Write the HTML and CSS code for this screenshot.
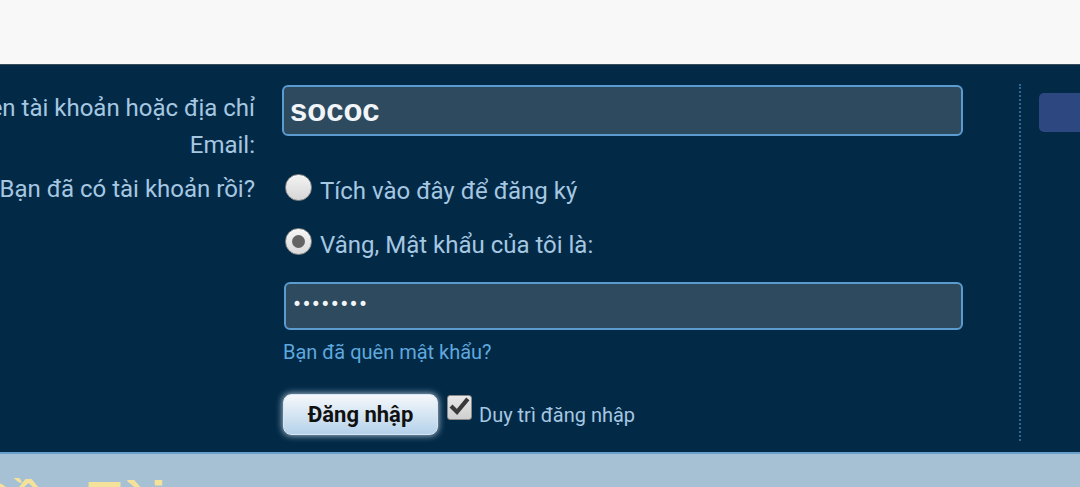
FILE: index.html
```html
<!DOCTYPE html>
<html lang="vi">
<head>
<meta charset="utf-8">
<title>Đăng nhập</title>
<link rel="stylesheet" href="styles.css">
</head>
<body>
<div class="topbar"></div>
<div class="main">
  <form class="login">
    <label class="label label-user" for="user">Tên tài khoản hoặc địa chỉ Email:</label>
    <div class="cell-user">
      <input id="user" class="field field-user" type="text" value="sococ" readonly>
    </div>
    <div class="label">Bạn đã có tài khoản rồi?</div>
    <div class="cell-pass">
      <div class="option">
        <span class="radio"></span>
        <span class="option-text">Tích vào đây để đăng ký</span>
      </div>
      <div class="option option-second">
        <span class="radio radio-on"><span class="radio-dot"></span></span>
        <span class="option-text">Vâng, Mật khẩu của tôi là:</span>
      </div>
      <div class="field field-pass"><span class="dots">••••••••</span></div>
      <a class="forgot" href="#">Bạn đã quên mật khẩu?</a>
      <div class="actions">
        <button type="button" class="btn-login">Đăng nhập</button>
        <span class="check">
          <svg viewBox="0 0 25 25" width="25" height="25"><path d="M5.5 12.5 L10 17 L19.5 5.5" fill="none" stroke="#3a3a3a" stroke-width="4.2" stroke-linecap="square" stroke-linejoin="miter"/></svg>
        </span>
        <span class="remember">Duy trì đăng nhập</span>
      </div>
    </div>
  </form>
  <div class="divider"></div>
  <div class="side"><div class="side-box"></div></div>
</div>
<div class="footer">
  <h2 class="footer-title">Đề Tài</h2>
</div>
</body>
</html>
```
FILE: styles.css
```css
html, body {
  margin: 0;
  padding: 0;
  height: 487px;
  overflow: hidden;
}
body {
  font-family: Roboto, "Noto Sans", "Liberation Sans", sans-serif;
  background: #022a47;
}
.topbar {
  height: 64px;
  background: #f8f8f8;
  border-bottom: 1px solid #3a4b5b;
}
.main {
  display: flex;
  height: 387px;
  box-sizing: border-box;
  padding: 19px 0 11px;
  background: #022a47;
}
.login {
  display: grid;
  grid-template-columns: 282px 681px;
  column-gap: 27px;
  row-gap: 7px;
  align-content: start;
  margin: 1px 0 0 -27px;
  flex: none;
}
.label {
  font-size: 24px;
  line-height: 37px;
  color: #a6c7e1;
  text-align: right;
}
.label-user {
  padding-top: 5px;
}
.field {
  display: block;
  box-sizing: border-box;
  border: 2px solid #5b9bd0;
  border-radius: 6px;
  background: #2d4a5e;
  outline: none;
}
.field-user {
  width: 681px;
  height: 51px;
  margin: 0;
  padding: 0 6px;
  font-family: "Liberation Sans", Arial, sans-serif;
  font-weight: bold;
  font-size: 31px;
  color: #f1f5f9;
}
.cell-pass {
  display: flex;
  flex-direction: column;
  align-items: flex-start;
}
.option {
  display: flex;
  align-items: flex-start;
  height: 37px;
}
.option-second {
  margin-top: 17px;
}
.radio {
  box-sizing: border-box;
  width: 27px;
  height: 27px;
  margin: 3px 0 0 3px;
  border-radius: 50%;
  border: 1px solid #8d8d8d;
  background: linear-gradient(#f3f3f3, #d6d6d6);
  box-shadow: inset 0 1px 1px rgba(255,255,255,0.8);
  display: flex;
  align-items: center;
  justify-content: center;
}
.radio-on {
  background: linear-gradient(#f6f6f6, #dadada);
}
.radio-dot {
  width: 13px;
  height: 13px;
  border-radius: 50%;
  background: #646464;
}
.option-text {
  margin-left: 8px;
  font-size: 24px;
  line-height: 40px;
  color: #a6c7e1;
}
.field-pass {
  width: 679px;
  height: 48px;
  margin: 20px 0 0 2px;
  padding: 0 6px;
  display: flex;
  align-items: center;
}
.dots {
  font-family: "DejaVu Sans", sans-serif;
  font-size: 17px;
  letter-spacing: -0.6px;
  color: #f3f6f9;
  line-height: 1;
  margin-top: -4px;
}
.forgot {
  margin: 11px 0 0 1px;
  font-size: 20px;
  line-height: 22px;
  color: #5fa8de;
  text-decoration: none;
}
.actions {
  display: flex;
  align-items: center;
  margin-top: 31px;
  margin-left: 1px;
}
.btn-login {
  width: 155px;
  height: 41px;
  border: 1px solid #d7e6f2;
  border-radius: 8px;
  background: linear-gradient(#f5f8fb, #b5d2ea);
  box-shadow: 0 0 7px rgba(235,245,255,0.85);
  font-family: Roboto, "Liberation Sans", sans-serif;
  font-weight: bold;
  font-size: 22px;
  color: #111;
  padding: 0;
}
.check {
  box-sizing: border-box;
  width: 25px;
  height: 25px;
  margin-left: 9px;
  align-self: flex-start;
  margin-top: 1px;
  border: 1px solid #8a8a8a;
  border-radius: 3px;
  background: linear-gradient(#e8e8e8, #cfcfcf);
  display: flex;
  align-items: center;
  justify-content: center;
  overflow: hidden;
}
.check svg {
  display: block;
  flex: none;
}
.remember {
  margin-left: 7px;
  font-size: 20px;
  color: #a6c7e1;
}
.divider {
  flex: none;
  margin-left: 56px;
  width: 0;
  border-left: 2px dotted #2b6797;
}
.side {
  flex: 1;
  padding: 9px 0 0 18px;
}
.side-box {
  height: 39px;
  background: #2d4781;
  border-radius: 5px 0 0 5px;
}
.footer {
  height: 33px;
  border-top: 2px solid #6a9ecb;
  background: #a6c0d4;
  overflow: hidden;
}
.footer-title {
  margin: 0 0 0 -26px;
  padding-top: 19px;
  font-family: "Liberation Sans", Arial, sans-serif;
  font-weight: bold;
  font-size: 54px;
  line-height: 54px;
  word-spacing: 30px;
  white-space: nowrap;
  color: #f5e29a;
  filter: blur(0.6px);
}
```
